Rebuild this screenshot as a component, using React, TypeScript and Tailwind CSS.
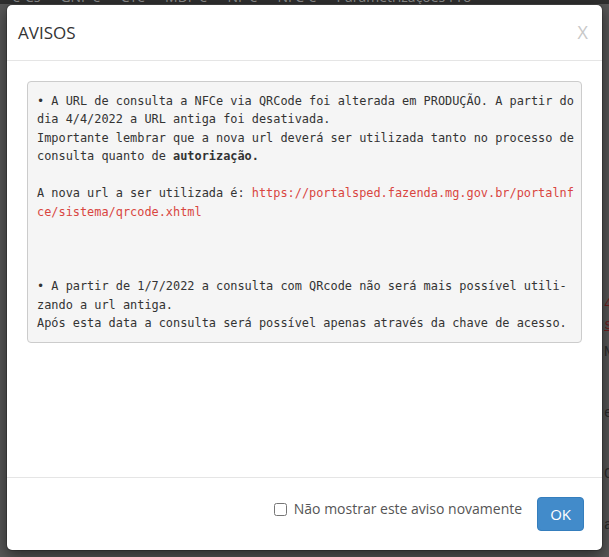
import React from 'react';

const navItems = ['=-e-Cs', 'GNF-e', 'CTe', 'MDF-e', 'NF-e', 'NFC-e', 'Parametrizações Pro'];

function Line({ children }: { children?: React.ReactNode }) {
    return <div className="h-[18.57px] whitespace-pre">{children ?? ' '}</div>;
}

function AvisoBox() {
    const red = 'text-[#d9453f]';
    return (
        <div className="rounded-[4px] border border-[#cccccc] bg-[#f5f5f5] px-[9px] py-[9.5px] text-[11.9px] leading-[18.57px] text-[#333333] font-['DejaVu_Sans_Mono',monospace]">
            <Line>• A URL de consulta a NFCe via QRCode foi alterada em PRODUÇÃO. A partir do</Line>
            <Line>dia 4/4/2022 a URL antiga foi desativada.</Line>
            <Line>Importante lembrar que a nova url deverá ser utilizada tanto no processo de</Line>
            <Line>consulta quanto de <b className="font-bold">autorização.</b></Line>
            <Line />
            <Line>A nova url a ser utilizada é: <span className={red}>https://portalsped.fazenda.mg.gov.br/portalnf</span></Line>
            <Line><span className={red}>ce/sistema/qrcode.xhtml</span></Line>
            <Line />
            <Line />
            <Line />
            <Line>• A partir de 1/7/2022 a consulta com QRcode não será mais possível utili-</Line>
            <Line>zando a url antiga.</Line>
            <Line>Após esta data a consulta será possível apenas através da chave de acesso.</Line>
        </div>
    );
}

export default function App() {
    return (
        <div className="relative w-[609px] h-[557px] overflow-hidden bg-[#585858] font-['Open_Sans',sans-serif]">
            {/* page behind the overlay */}
            <div className="h-[4px] overflow-hidden bg-[#2f2f2f]">
                <div className="-mt-[11px] flex gap-[20px] text-[14px] leading-[16px] text-[#8c8c8c] whitespace-nowrap">
                    {navItems.map((n) => (
                        <span key={n}>{n}</span>
                    ))}
                </div>
            </div>
            <div className="ml-[604px] flex flex-col text-[14px] font-['Liberation_Mono',monospace] text-[#2a2a2a]">
                <div className="h-[290px]" />
                <span className="text-[#6e1d1d]">4</span>
                <span className="text-[#6e1d1d] underline">s</span>
                <div className="h-[6px]" />
                <span>N</span>
                <div className="h-[40px]" />
                <span>e</span>
                <div className="h-[40px]" />
                <span>C</span>
                <div className="h-[30px]" />
                <span>a</span>
            </div>

            {/* modal */}
            <div className="absolute left-[6px] top-[4px] w-[597px] h-[547px] flex flex-col rounded-[6px] border border-black/20 bg-white shadow-[0_5px_15px_rgba(0,0,0,0.5)] bg-clip-padding">
                <div className="flex items-center justify-between border-b border-[#e5e5e5] pl-[11px] pr-[14px] py-[15px]">
                    <h4 className="text-[17px] leading-[25px] text-[#333333]">AVISOS</h4>
                    <span className="text-[18px] leading-[25px] text-[#c8c8c8]">X</span>
                </div>
                <div className="h-[416px] px-[20px] pt-[20px]">
                    <AvisoBox />
                </div>
                <div className="flex items-center justify-end gap-[15px] border-t border-[#e5e5e5] px-[18px] py-[19px]">
                    <label className="-mt-[10px] flex items-center gap-[7px] text-[14px] leading-[20px] text-[#555555]">
                        <input type="checkbox" className="m-0 h-[13px] w-[13px]" />
                        Não mostrar este aviso novamente
                    </label>
                    <button className="h-[34px] rounded-[4px] border border-[#357ebd] bg-[#428bca] px-[12px] text-[15px] text-white">
                        OK
                    </button>
                </div>
            </div>
        </div>
    );
}
